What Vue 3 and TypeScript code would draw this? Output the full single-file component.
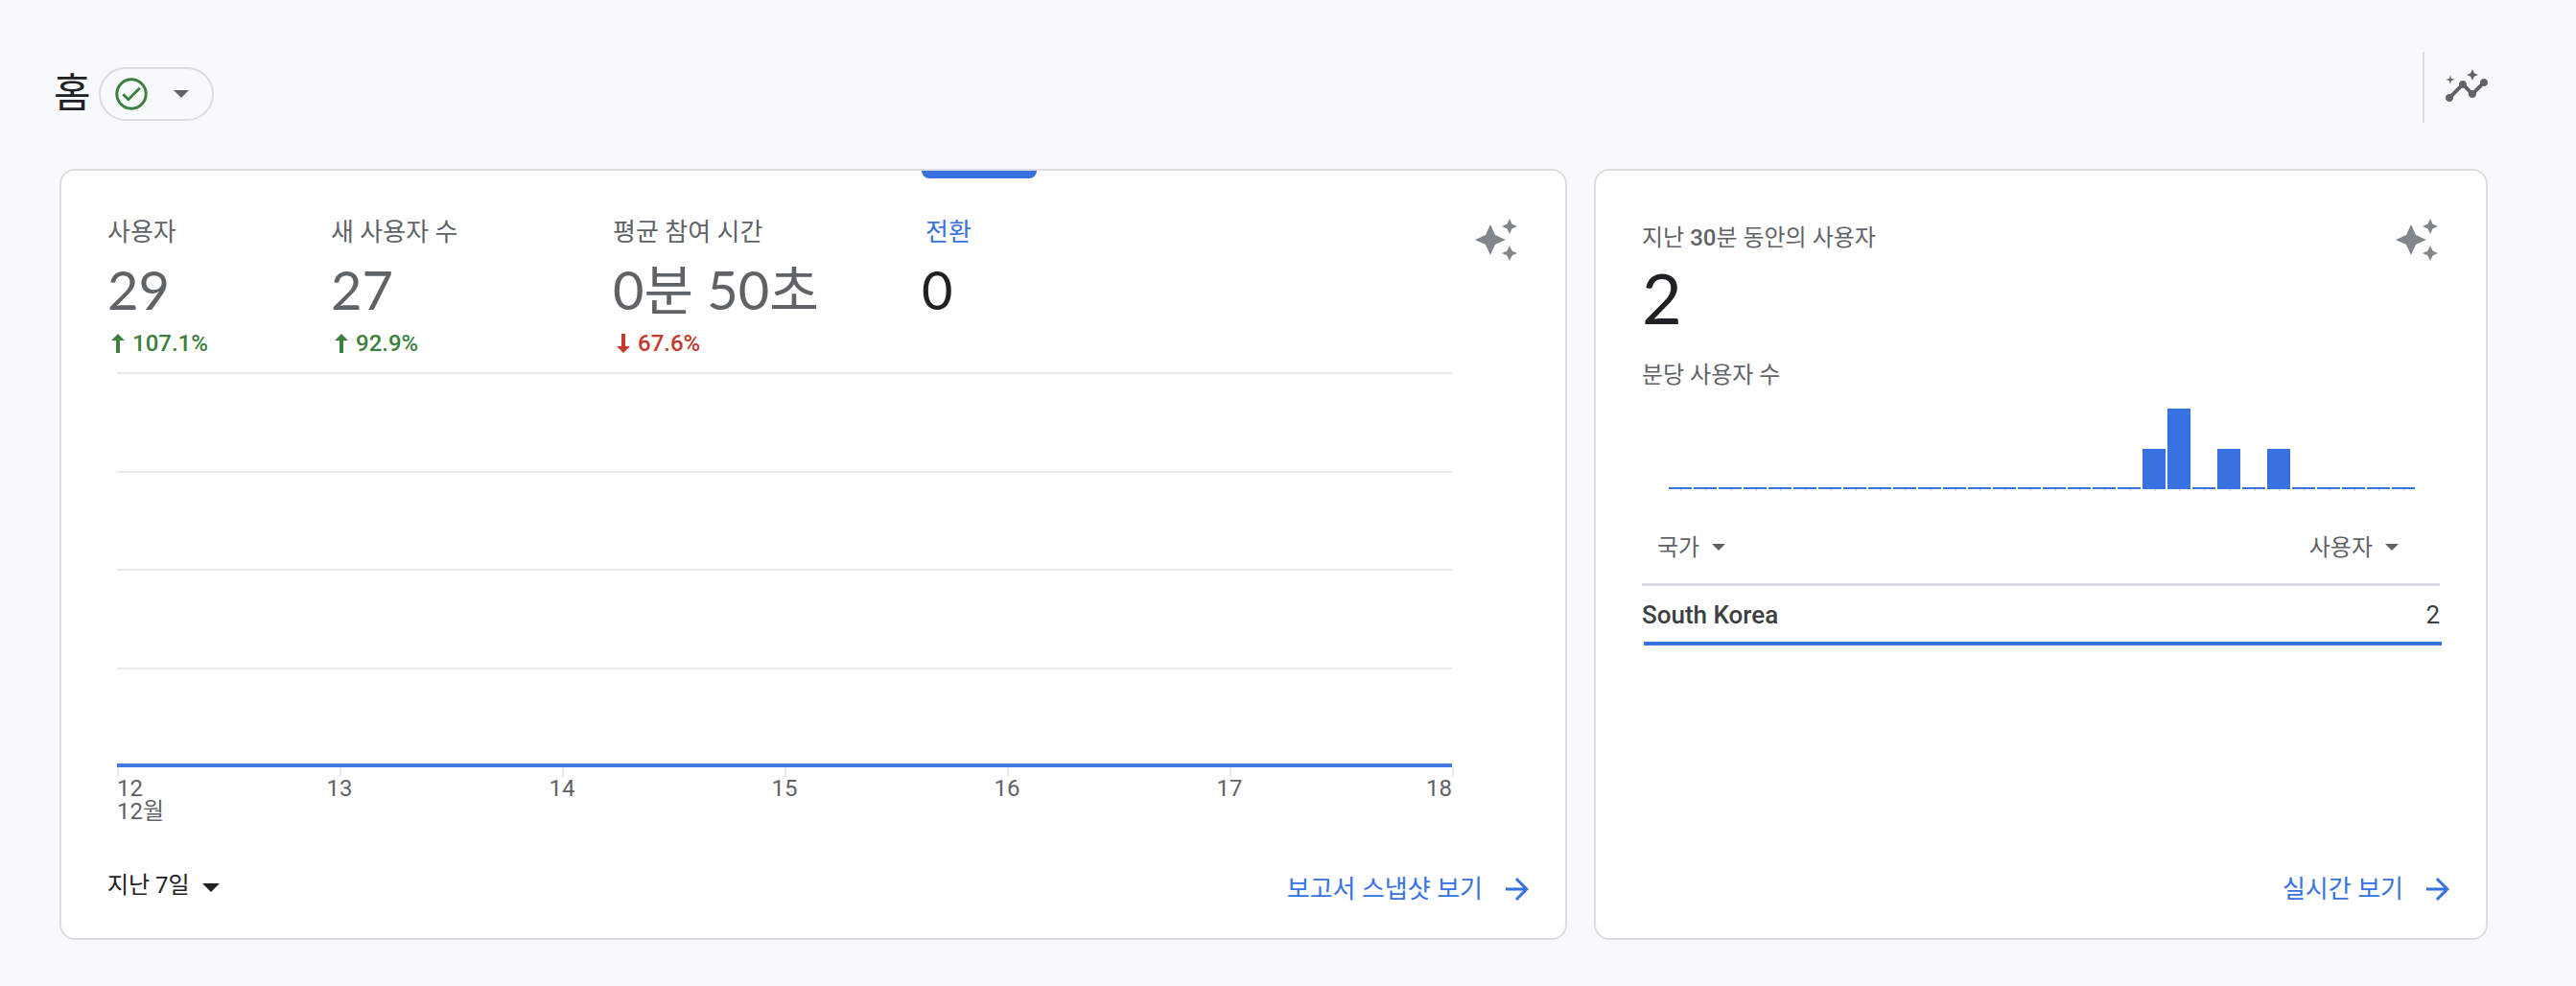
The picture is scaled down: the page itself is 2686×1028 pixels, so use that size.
<script setup lang="ts">
import { ref } from 'vue'

interface Metric {
  label: string
  value: string
  delta?: string
  trend?: 'up' | 'down'
}

const metrics: Metric[] = [
  { label: '사용자', value: '29', delta: '107.1%', trend: 'up' },
  { label: '새 사용자 수', value: '27', delta: '92.9%', trend: 'up' },
  { label: '평균 참여 시간', value: '0분 50초', delta: '67.6%', trend: 'down' },
  { label: '전환', value: '0' },
]
const active = ref(3)

const days: string[] = ['12', '13', '14', '15', '16', '17', '18']

const perMinute: number[] = Array.from({ length: 30 }, () => 0)
perMinute[19] = 1
perMinute[20] = 2
perMinute[22] = 1
perMinute[24] = 1
const peak = Math.max(...perMinute)
const barHeight = (n: number): string => `${(n / peak) * 100}%`

const countries = [{ name: 'South Korea', users: 2 }]

const sparklePath =
  'M19 9l1.25-2.75L23 5l-2.75-1.25L19 1l-1.25 2.75L15 5l2.75 1.25L19 9zm-7.5.5L9 4 6.5 9.5 1 12l5.5 2.5L9 20l2.5-5.5L17 12l-5.5-2.5zM19 15l-1.25 2.75L15 19l2.75 1.25L19 23l1.25-2.75L23 19l-2.75-1.25L19 15z'
const forwardPath = 'M12 4l-1.41 1.41L16.17 11H4v2h12.17l-5.58 5.59L12 20l8-8z'
</script>

<template>
  <div class="page">
    <header class="header">
      <div class="heading">
        <h1>홈</h1>
        <button class="status" type="button" aria-label="데이터 상태">
          <svg class="check" viewBox="0 0 24 24" fill="none" stroke="currentColor" aria-hidden="true">
            <circle cx="12" cy="12" r="9.1" stroke-width="1.8" />
            <path d="M6.8 12.1l3.3 3.3 7.2-7.2" stroke-width="1.7" />
          </svg>
          <span class="caret"></span>
        </button>
      </div>
      <div class="tools">
        <button class="icon-button insights" type="button" aria-label="인사이트">
          <svg viewBox="0 0 24 24" fill="currentColor" aria-hidden="true">
            <path d="M21 8c-1.45 0-2.26 1.44-1.93 2.51l-3.55 3.56c-.3-.09-.74-.09-1.04 0l-2.55-2.55C12.27 10.45 11.46 9 10 9c-1.45 0-2.27 1.44-1.93 2.52l-4.56 4.55C2.44 15.74 1 16.55 1 18c0 1.1.9 2 2 2 1.45 0 2.26-1.44 1.93-2.51l4.55-4.56c.3.09.74.09 1.04 0l2.55 2.55C12.73 16.55 13.54 18 15 18c1.45 0 2.27-1.44 1.93-2.52l3.56-3.55C21.56 12.26 23 11.45 23 10c0-1.1-.9-2-2-2z" />
            <path d="M15 9l.94-2.07L18 6l-2.06-.93L15 3l-.92 2.07L12 6l2.08.93zM3.5 11L4 9l2-.5L4 8l-.5-2L3 8l-2 .5L3 9z" />
          </svg>
        </button>
      </div>
    </header>

    <main class="cards">
      <section class="card">
        <div class="overview-top">
          <div class="metrics">
            <button
              v-for="(m, i) in metrics"
              :key="m.label"
              type="button"
              class="metric"
              :class="{ active: i === active }"
              @click="active = i"
            >
              <span class="metric-label">{{ m.label }}</span>
              <span class="metric-value">{{ m.value }}</span>
              <span v-if="m.delta" class="delta" :class="m.trend">
                <svg viewBox="0 0 14 20" fill="currentColor" aria-hidden="true">
                  <path v-if="m.trend === 'up'" d="M7 0l7 7H9v13H5V7H0z" />
                  <path v-else d="M7 20l7-7H9V0H5v13H0z" />
                </svg>
                {{ m.delta }}
              </span>
            </button>
          </div>
          <button class="icon-button sparkle" type="button" aria-label="통계 보기">
            <svg viewBox="0 0 24 24" fill="currentColor" aria-hidden="true"><path :d="sparklePath" /></svg>
          </button>
        </div>

        <div class="chart">
          <div class="plot">
            <span v-for="n in 5" :key="n" class="gridline"></span>
            <span class="series"></span>
          </div>
          <div class="ticks"><span v-for="n in 6" :key="n"></span></div>
          <div class="days">
            <span v-for="(d, i) in days" :key="d">{{ d }}<template v-if="i === 0"><br />12월</template></span>
          </div>
        </div>

        <footer class="card-footer">
          <button class="range" type="button">지난 7일 <span class="caret"></span></button>
          <a class="more" href="#snapshot">
            보고서 스냅샷 보기
            <svg viewBox="0 0 24 24" fill="currentColor" aria-hidden="true"><path :d="forwardPath" /></svg>
          </a>
        </footer>
      </section>

      <section class="card">
        <div class="realtime-top">
          <div>
            <h2>지난 <b>30</b>분 동안의 사용자</h2>
            <p class="total">2</p>
          </div>
          <button class="icon-button sparkle" type="button" aria-label="통계 보기">
            <svg viewBox="0 0 24 24" fill="currentColor" aria-hidden="true"><path :d="sparklePath" /></svg>
          </button>
        </div>
        <h3>분당 사용자 수</h3>
        <div class="bars">
          <div v-for="(n, i) in perMinute" :key="i" class="slot">
            <span class="bar" :style="{ height: barHeight(n) }"></span>
          </div>
        </div>
        <table>
          <thead>
            <tr>
              <th scope="col"><button type="button">국가 <span class="caret"></span></button></th>
              <th scope="col" class="num"><button type="button">사용자 <span class="caret"></span></button></th>
            </tr>
          </thead>
          <tbody>
            <tr v-for="c in countries" :key="c.name">
              <td class="name">{{ c.name }}</td>
              <td class="num">{{ c.users }}</td>
            </tr>
          </tbody>
        </table>
        <div class="share"></div>
        <footer class="card-footer">
          <a class="more" href="#realtime">
            실시간 보기
            <svg viewBox="0 0 24 24" fill="currentColor" aria-hidden="true"><path :d="forwardPath" /></svg>
          </a>
        </footer>
      </section>
    </main>
  </div>
</template>

<style>
body {
  margin: 0;
  background: #f8f9fb;
}
</style>

<style scoped>
.page {
  box-sizing: border-box;
  min-height: 100vh;
  padding: 54px 0 48px;
  color: #202124;
  font-family: Roboto, 'Noto Sans CJK KR', sans-serif;
  font-size: 24px;
}
h1,
h2,
h3,
p {
  margin: 0;
  font-weight: 400;
}
button {
  padding: 0;
  border: 0;
  background: none;
  color: inherit;
  font: inherit;
  text-align: left;
  cursor: pointer;
}
svg {
  display: block;
  flex: none;
}
.caret {
  display: inline-block;
  width: 0;
  border: 8px solid transparent;
  border-top-color: currentColor;
  border-bottom: 0;
}

.header {
  display: flex;
  justify-content: space-between;
  align-items: flex-start;
  padding: 0 90px 0 56px;
}
.heading {
  display: flex;
  align-items: center;
  gap: 8px;
  padding-top: 16px;
}
h1 {
  font-size: 42px;
  line-height: 56px;
}
.status {
  box-sizing: border-box;
  display: flex;
  align-items: center;
  justify-content: space-between;
  width: 120px;
  height: 56px;
  padding: 0 24px 0 12px;
  border: 2px solid #dadce0;
  border-radius: 28px;
  color: #5f6368;
}
.check {
  width: 40px;
  height: 40px;
  color: #3b803e;
}
.tools {
  box-sizing: border-box;
  display: flex;
  align-items: flex-start;
  height: 74px;
  padding: 12px 0 0 20px;
  border-left: 2px solid #dadce0;
}
.icon-button,
.icon-button svg {
  width: 48px;
  height: 48px;
}
.insights {
  color: #5f6368;
}
.sparkle {
  flex: none;
  color: #80868b;
}

.cards {
  display: grid;
  grid-template-columns: 1572fr 932fr;
  gap: 28px;
  padding: 48px 92px 0 62px;
}
.card {
  box-sizing: border-box;
  display: flex;
  flex-direction: column;
  min-width: 0;
  border: 2px solid #dadce0;
  border-radius: 16px;
  background: #fff;
}

.overview-top {
  display: flex;
  justify-content: space-between;
  align-items: flex-start;
  padding: 0 48px;
}
.overview-top .sparkle {
  margin-top: 48px;
}
.metrics {
  display: grid;
  grid-template-columns: 233px 294px 322px 120px;
}
.metric {
  position: relative;
  display: flex;
  flex-direction: column;
  gap: 10px;
  padding-top: 46px;
  color: #5f6368;
  white-space: nowrap;
}
.metric-label {
  font-size: 26px;
  line-height: 36px;
}
.metric-value {
  font-family: Lato, 'Noto Sans CJK KR', sans-serif;
  font-size: 56px;
  line-height: 64px;
}
.metric.active::before {
  content: '';
  position: absolute;
  top: 0;
  left: 0;
  width: 120px;
  height: 8px;
  border-radius: 0 0 8px 8px;
  background: #3871e0;
}
.metric.active .metric-label {
  padding-left: 4px;
  color: #3871e0;
}
.metric.active .metric-value {
  color: #202124;
}
.delta {
  display: flex;
  align-items: center;
  gap: 8px;
  padding-left: 4px;
  font-weight: 500;
  line-height: 28px;
}
.delta svg {
  width: 14px;
  height: 20px;
}
.up {
  color: #3b803e;
}
.down {
  color: #c5392c;
}

.chart {
  margin: 16px 118px 0 58px;
}
.plot {
  position: relative;
  display: flex;
  flex-direction: column;
  justify-content: space-between;
  height: 412px;
}
.gridline {
  height: 2px;
  background: #e8eaed;
}
.series {
  position: absolute;
  right: 0;
  bottom: 0;
  left: 0;
  height: 4px;
  background: #447ae4;
}
.ticks {
  display: flex;
  height: 10px;
  margin-right: -2px;
}
.ticks span {
  box-sizing: border-box;
  flex: 1;
  border-left: 2px solid #e8eaed;
}
.ticks span:last-child {
  border-right: 2px solid #e8eaed;
}
.days {
  display: flex;
  color: #5f6368;
  line-height: 24px;
}
.days span {
  flex: 2;
  text-align: center;
}
.days span:first-child {
  flex: 1;
  text-align: left;
}
.days span:last-child {
  flex: 1;
  text-align: right;
}

.card-footer {
  display: flex;
  justify-content: space-between;
  align-items: flex-start;
  margin-top: auto;
  padding: 51px 32px 33px 48px;
}
.range {
  display: flex;
  align-items: center;
  gap: 13px;
  line-height: 28px;
}
.range .caret {
  margin-top: 4px;
  border-width: 9px 9px 0;
}
.more {
  display: flex;
  align-items: center;
  gap: 18px;
  margin-left: auto;
  color: #3871e0;
  font-size: 26px;
  line-height: 36px;
  text-decoration: none;
}
.more svg {
  width: 36px;
  height: 36px;
}

.realtime-top {
  display: flex;
  justify-content: space-between;
  align-items: flex-start;
  padding: 48px 48px 0;
}
h2,
h3 {
  color: #5f6368;
  font-size: 24px;
  line-height: 32px;
}
h2 {
  margin-top: 6px;
}
h2 b {
  font-weight: 500;
}
.total {
  margin-top: 6px;
  font-family: Lato, sans-serif;
  font-size: 72px;
  line-height: 80px;
}
h3 {
  margin: 25px 48px 0;
}
.bars {
  display: flex;
  gap: 2px;
  height: 84px;
  margin: 19px 74px 0 76px;
}
.slot {
  position: relative;
  display: flex;
  flex: 1;
  align-items: flex-end;
}
.slot::after {
  content: '';
  position: absolute;
  top: 100%;
  left: 50%;
  width: 2px;
  height: 2px;
  background: #dadce0;
}
.bar {
  width: 100%;
  min-height: 2px;
  background: #3871e0;
}
table {
  margin: 20px 48px 0;
  border-spacing: 0;
}
th {
  box-sizing: border-box;
  height: 81px;
  padding: 0 16px 2px;
  border-bottom: 3px solid #dadce0;
  color: #5f6368;
  font-weight: 400;
  text-align: left;
}
th.num {
  padding-right: 43px;
}
th button {
  display: inline-flex;
  align-items: center;
  gap: 13px;
}
th .caret {
  margin-top: 4px;
  border-width: 7px 7px 0;
}
td {
  box-sizing: border-box;
  height: 58px;
  padding: 2px 0 0;
  color: #3c4043;
  font-size: 26px;
  line-height: 36px;
}
.name {
  font-weight: 500;
}
.num {
  text-align: right;
}
.share {
  height: 4px;
  margin: 0 46px 0 50px;
  background: #3871e0;
}
</style>
